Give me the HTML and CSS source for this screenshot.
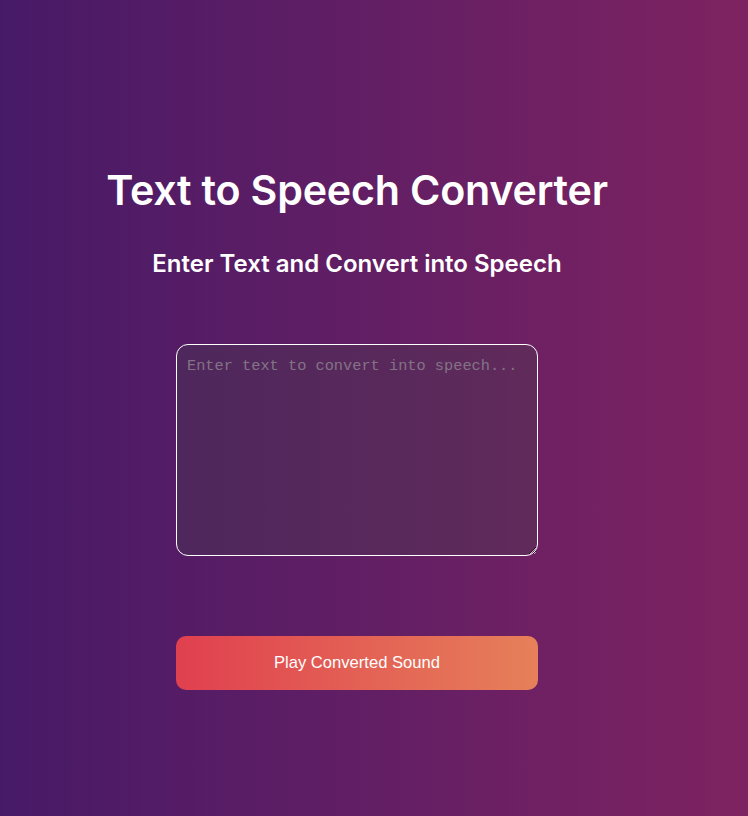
FILE: index.html
```html
<!DOCTYPE html>
<html lang="en">
<head>
<meta charset="utf-8">
<title>Text to Speech Converter</title>
<link rel="stylesheet" href="styles.css">
</head>
<body>
<main class="app">
  <h1 class="title">Text to Speech Converter</h1>
  <h2 class="subtitle">Enter Text and Convert into Speech</h2>
  <textarea class="input" placeholder="Enter text to convert into speech..."></textarea>
  <button class="play">Play Converted Sound</button>
</main>
</body>
</html>
```

FILE: styles.css
```css
html, body {
  height: 100%;
}
body {
  margin: 0;
  background: linear-gradient(to right, #471a67, #7e2361);
  font-family: "Inter", "Open Sans", sans-serif;
  color: #fff;
}
.app {
  width: 714px;
  display: flex;
  flex-direction: column;
  align-items: center;
  padding-top: 162px;
}
.title {
  margin: 0;
  font-size: 41.2px;
  font-weight: 600;
  line-height: 56px;
  letter-spacing: -0.2px;
}
.subtitle {
  margin: 30px 0 0;
  font-size: 24px;
  font-weight: 600;
  line-height: 32px;
}
.input {
  margin-top: 64px;
  box-sizing: border-box;
  width: 362px;
  height: 212px;
  border: 1px solid #fff;
  border-radius: 12px;
  background: rgba(65, 65, 72, 0.3);
  padding: 12px 10px 10px;
  font-family: "Liberation Mono", "DejaVu Sans Mono", monospace;
  font-size: 15.3px;
  color: #fff;
  outline: none;
}
.input::placeholder {
  color: #827486;
}
.play {
  margin-top: 80px;
  width: 362px;
  height: 54px;
  border: none;
  border-radius: 10px;
  background: linear-gradient(to right, #e0404f, #e6805a);
  color: #fff;
  font-family: "Liberation Sans", Arial, sans-serif;
  font-size: 16.6px;
  cursor: pointer;
}
```
